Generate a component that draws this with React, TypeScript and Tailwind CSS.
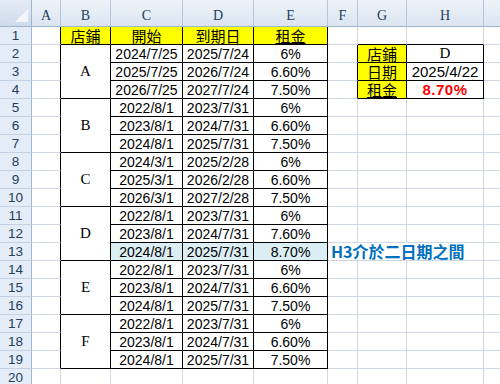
import React from 'react';

type Store = { name: string; rows: [string, string, string][] };

const stores: Store[] = [
  { name: 'A', rows: [['2024/7/25', '2025/7/24', '6%'], ['2025/7/25', '2026/7/24', '6.60%'], ['2026/7/25', '2027/7/24', '7.50%']] },
  { name: 'B', rows: [['2022/8/1', '2023/7/31', '6%'], ['2023/8/1', '2024/7/31', '6.60%'], ['2024/8/1', '2025/7/31', '7.50%']] },
  { name: 'C', rows: [['2024/3/1', '2025/2/28', '6%'], ['2025/3/1', '2026/2/28', '6.60%'], ['2026/3/1', '2027/2/28', '7.50%']] },
  { name: 'D', rows: [['2022/8/1', '2023/7/31', '6%'], ['2023/8/1', '2024/7/31', '7.60%'], ['2024/8/1', '2025/7/31', '8.70%']] },
  { name: 'E', rows: [['2022/8/1', '2023/7/31', '6%'], ['2023/8/1', '2024/7/31', '6.60%'], ['2024/8/1', '2025/7/31', '7.50%']] },
  { name: 'F', rows: [['2022/8/1', '2023/7/31', '6%'], ['2023/8/1', '2024/7/31', '6.60%'], ['2024/8/1', '2025/7/31', '7.50%']] },
];

// border colour sets
const GRID = 'border-r-[#d0d7e5] border-b-[#d0d7e5]';
const BLACK = 'border-r-black border-b-black';
const BLACK_R = 'border-r-black border-b-[#d0d7e5]';
const BLACK_B = 'border-r-[#d0d7e5] border-b-black';

const num = "font-['Liberation_Sans',sans-serif] text-[14px] leading-none";
const cjk = "font-['Noto_Sans_CJK_TC',sans-serif] text-[15px] leading-[17px]";
const latin = "font-['Liberation_Serif',serif] text-[15px] leading-none";

const Cell: React.FC<{ className?: string; children?: React.ReactNode }> = ({ className = '', children }) => (
  <div className={`flex items-center justify-center whitespace-nowrap border-r border-b ${className}`}>
    {children}
  </div>
);

const RowHead: React.FC<{ n: number }> = ({ n }) => (
  <div className="flex items-center justify-center border-r border-b border-r-[#9eb6ce] border-b-[#c3d1e3] bg-[#e4ecf7] pt-[1px] font-['Liberation_Sans',sans-serif] text-[13.5px] leading-none text-[#22405f]">
    {n}
  </div>
);

const ColHead: React.FC<{ label: string; last?: boolean }> = ({ label, last }) => (
  <div
    className={`flex items-center justify-center border-b border-b-[#9eb6ce] bg-linear-to-b from-[#eef3f9] to-[#dbe5f1] pt-[5px] font-['Liberation_Serif',serif] text-[14px] leading-none text-[#22405f] ${
      last ? '' : 'border-r border-r-[#b4c6dc]'
    }`}
  >
    {label}
  </div>
);

export default function App() {
  const body: React.ReactNode[] = [];

  // row 1
  body.push(
    <RowHead key="h1" n={1} />,
    <Cell key="a1" className={BLACK_R} />,
    <Cell key="b1" className={`${BLACK} bg-[#ffff00] ${cjk}`}>店鋪</Cell>,
    <Cell key="c1" className={`${BLACK} bg-[#ffff00] ${cjk}`}>開始</Cell>,
    <Cell key="d1" className={`${BLACK} bg-[#ffff00] ${cjk}`}>到期日</Cell>,
    <Cell key="e1" className={`${BLACK} bg-[#ffff00] ${cjk}`}><span className="underline underline-offset-1">租金</span></Cell>,
    <Cell key="f1" className={GRID} />,
    <Cell key="g1" className={BLACK_B} />,
    <Cell key="h1c" className={BLACK_B} />,
    <Cell key="i1" className="border-r-0 border-b-[#d0d7e5]" />
  );

  const side: Record<number, [string, string, string]> = {
    2: ['店鋪', 'D', ''],
    3: ['日期', '2025/4/22', ''],
    4: ['租金', '8.70%', 'red'],
  };

  for (let r = 2; r <= 19; r++) {
    const s = stores[Math.floor((r - 2) / 3)];
    const sub = (r - 2) % 3;
    const [start, end, rate] = s.rows[sub];
    const hl = r === 13 ? 'bg-[#dbeef4]' : '';
    body.push(<RowHead key={`h${r}`} n={r} />);
    body.push(<Cell key={`a${r}`} className={BLACK_R} />);
    if (sub === 0) {
      body.push(
        <Cell key={`b${r}`} className={`row-span-3 ${BLACK} ${latin}`}>
          {s.name}
        </Cell>
      );
    }
    body.push(
      <Cell key={`c${r}`} className={`${BLACK} ${hl} ${num}`}>{start}</Cell>,
      <Cell key={`d${r}`} className={`${BLACK} ${hl} ${num}`}>{end}</Cell>,
      <Cell key={`e${r}`} className={`${BLACK} ${hl} ${num}`}>{rate}</Cell>
    );
    if (r === 13) {
      body.push(
        <Cell
          key="f13"
          className={`col-span-3 justify-start pl-[3px] ${GRID} font-['Noto_Sans_CJK_TC',sans-serif] text-[16px] leading-[17px] font-bold text-[#0070c0]`}
        >
          H3介於二日期之間
        </Cell>
      );
    } else if (side[r]) {
      const [label, value, tone] = side[r];
      body.push(
        <Cell key={`f${r}`} className={BLACK_R} />,
        <Cell key={`g${r}`} className={`${BLACK} bg-[#ffff00] ${cjk}`}>
          {r === 4 ? <span className="underline underline-offset-1">{label}</span> : label}
        </Cell>,
        <Cell
          key={`hh${r}`}
          className={`${BLACK} ${
            tone === 'red'
              ? "font-['Liberation_Sans',sans-serif] text-[15px] leading-none font-bold tracking-[0.5px] text-[#ff0000]"
              : r === 2
              ? latin
              : "font-['Liberation_Sans',sans-serif] text-[15px] leading-none"
          }`}
        >
          {value}
        </Cell>
      );
    } else {
      body.push(
        <Cell key={`f${r}`} className={GRID} />,
        <Cell key={`g${r}`} className={GRID} />,
        <Cell key={`hh${r}`} className={GRID} />
      );
    }
    body.push(<Cell key={`i${r}`} className="border-r-0 border-b-[#d0d7e5]" />);
  }

  // row 20
  body.push(
    <RowHead key="h20" n={20} />,
    <Cell key="a20" className={GRID} />,
    <Cell key="b20" className={GRID} />,
    <Cell key="c20" className={GRID} />,
    <Cell key="d20" className={GRID} />,
    <Cell key="e20" className={GRID} />,
    <Cell key="f20" className={GRID} />,
    <Cell key="g20" className={GRID} />,
    <Cell key="h20c" className={GRID} />,
    <Cell key="i20" className="border-r-0 border-b-[#d0d7e5]" />
  );

  return (
    <div className="h-[384px] w-[500px] overflow-hidden bg-white">
      <div className="grid grid-cols-[32px_29px_50px_72px_71px_74px_30px_49px_77px_1fr] grid-rows-[27px_repeat(20,18px)]">
        <div className="relative border-r border-b border-r-[#9eb6ce] border-b-[#9eb6ce] bg-linear-to-b from-[#e3ebf5] to-[#cfdbea]">
          <svg className="absolute right-[3px] bottom-[4px]" width="13" height="13" viewBox="0 0 13 13">
            <polygon points="13,0 13,13 0,13" fill="#f2f6fb" />
          </svg>
        </div>
        {['A', 'B', 'C', 'D', 'E', 'F', 'G', 'H'].map((l) => (
          <ColHead key={l} label={l} />
        ))}
        <ColHead label="" last />
        {body}
      </div>
    </div>
  );
}
